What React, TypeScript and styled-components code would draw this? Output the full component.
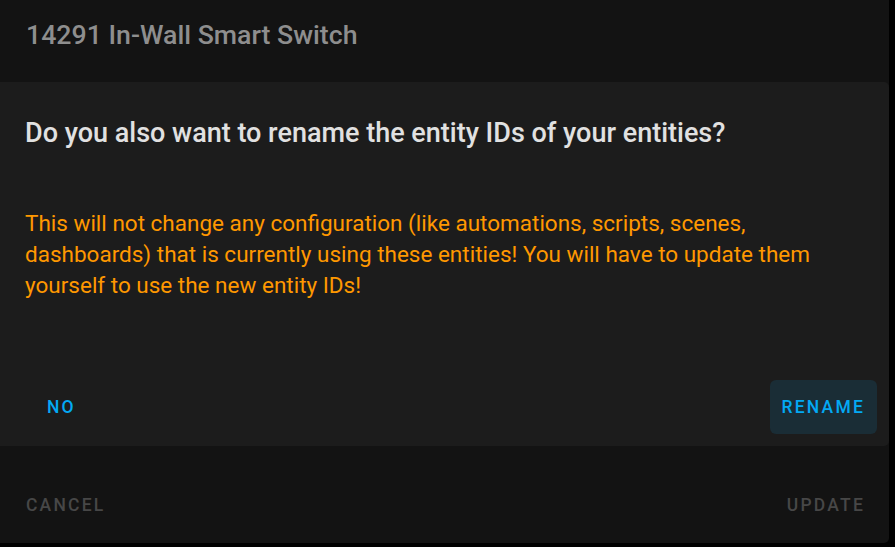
import styled, { createGlobalStyle } from "styled-components";

const GlobalStyle = createGlobalStyle`
  html, body {
    margin: 0;
    padding: 0;
    background: #000;
    font-family: Roboto, "Noto Sans", "Liberation Sans", sans-serif;
  }
`;

const Screen = styled.div`
  width: 895px;
  height: 547px;
  background: #000;
  overflow: hidden;
`;

const OuterDialog = styled.div`
  width: 889px;
  height: 543px;
  background: #131313;
  border-bottom-right-radius: 5px;
  display: flex;
  flex-direction: column;
`;

const Header = styled.div`
  height: 82px;
  box-sizing: border-box;
  padding: 18px 26px 0;
  font-size: 26.7px;
  font-weight: 500;
  color: #8e8e8e;
  line-height: 34px;
`;

const ConfirmDialog = styled.div`
  height: 364px;
  background: #1c1c1c;
  border-radius: 0 5px 5px 0;
  display: flex;
  flex-direction: column;
  box-sizing: border-box;
  padding: 34px 12px 12px 25px;
`;

const ConfirmTitle = styled.h2`
  margin: 0;
  font-size: 27px;
  font-weight: 500;
  color: #e1e1e1;
  line-height: 34px;
`;

const Warning = styled.p`
  margin: 58px 0 0;
  font-size: 22.5px;
  line-height: 31px;
  color: #ff9800;
  max-width: 840px;
`;

const Actions = styled.div`
  margin-top: auto;
  display: flex;
  justify-content: space-between;
  align-items: center;
`;

const TextButton = styled.button<{ $filled?: boolean; $muted?: boolean }>`
  font-family: inherit;
  border: none;
  border-radius: 6px;
  cursor: pointer;
  height: 54px;
  padding: 0 12px;
  background: ${({ $filled }) => ($filled ? "#1a2d36" : "transparent")};
  color: ${({ $muted }) => ($muted ? "#474747" : "#03a9f4")};
  font-size: 17.5px;
  font-weight: 500;
  letter-spacing: 2.2px;
  text-transform: uppercase;
`;

const Footer = styled.div`
  flex: 1;
  display: flex;
  justify-content: space-between;
  align-items: center;
  padding: 20px 12px 0 14px;
`;

export default function App() {
  return (
    <Screen>
      <GlobalStyle />
      <OuterDialog>
        <Header>14291 In-Wall Smart Switch</Header>
        <ConfirmDialog>
          <ConfirmTitle>
            Do you also want to rename the entity IDs of your entities?
          </ConfirmTitle>
          <Warning>
            This will not change any configuration (like automations, scripts,
            scenes, dashboards) that is currently using these entities! You
            will have to update them yourself to use the new entity IDs!
          </Warning>
          <Actions>
            <TextButton style={{ marginLeft: 10 }}>No</TextButton>
            <TextButton $filled>Rename</TextButton>
          </Actions>
        </ConfirmDialog>
        <Footer>
          <TextButton $muted>Cancel</TextButton>
          <TextButton $muted>Update</TextButton>
        </Footer>
      </OuterDialog>
    </Screen>
  );
}
